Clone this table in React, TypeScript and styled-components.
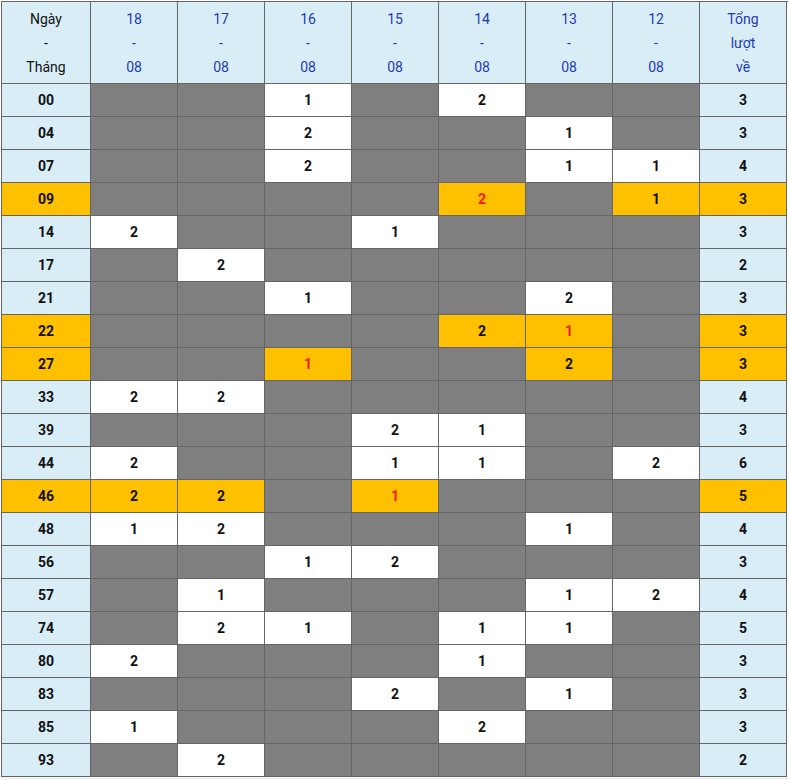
import React from "react";
import styled, { createGlobalStyle } from "styled-components";

const GlobalStyle = createGlobalStyle`
  body {
    margin: 0;
    background: #ffffff;
    font-family: Roboto, "Liberation Sans", Arial, sans-serif;
  }
`;

type Tone = "label" | "empty" | "value" | "hot";

const dates = ["18", "17", "16", "15", "14", "13", "12"];

// "" = no hit, "1" = hit, "2o" = hit on a hot row, "1r" = hot with red digit
const rows: { num: string; hot?: boolean; cells: string[]; total: number }[] = [
  { num: "00", cells: ["", "", "1", "", "2", "", ""], total: 3 },
  { num: "04", cells: ["", "", "2", "", "", "1", ""], total: 3 },
  { num: "07", cells: ["", "", "2", "", "", "1", "1"], total: 4 },
  { num: "09", hot: true, cells: ["", "", "", "", "2r", "", "1o"], total: 3 },
  { num: "14", cells: ["2", "", "", "1", "", "", ""], total: 3 },
  { num: "17", cells: ["", "2", "", "", "", "", ""], total: 2 },
  { num: "21", cells: ["", "", "1", "", "", "2", ""], total: 3 },
  { num: "22", hot: true, cells: ["", "", "", "", "2o", "1r", ""], total: 3 },
  { num: "27", hot: true, cells: ["", "", "1r", "", "", "2o", ""], total: 3 },
  { num: "33", cells: ["2", "2", "", "", "", "", ""], total: 4 },
  { num: "39", cells: ["", "", "", "2", "1", "", ""], total: 3 },
  { num: "44", cells: ["2", "", "", "1", "1", "", "2"], total: 6 },
  { num: "46", hot: true, cells: ["2o", "2o", "", "1r", "", "", ""], total: 5 },
  { num: "48", cells: ["1", "2", "", "", "", "1", ""], total: 4 },
  { num: "56", cells: ["", "", "1", "2", "", "", ""], total: 3 },
  { num: "57", cells: ["", "1", "", "", "", "1", "2"], total: 4 },
  { num: "74", cells: ["", "2", "1", "", "1", "1", ""], total: 5 },
  { num: "80", cells: ["2", "", "", "", "1", "", ""], total: 3 },
  { num: "83", cells: ["", "", "", "2", "", "1", ""], total: 3 },
  { num: "85", cells: ["1", "", "", "", "2", "", ""], total: 3 },
  { num: "93", cells: ["", "2", "", "", "", "", ""], total: 2 },
];

const tones: Record<Tone, string> = {
  label: "#d9edf7",
  empty: "#7f7f7f",
  value: "#ffffff",
  hot: "#ffc000",
};

const Page = styled.div`
  padding: 1px 0 0 1px;
  min-height: 779px;
  background: linear-gradient(#ffffff 777px, #f3f3f3 777px);
`;

const Grid = styled.div`
  display: grid;
  grid-template-columns: 89px repeat(8, 87px);
  grid-template-rows: 82px repeat(21, 33px);
  width: 786px;
  border-left: 1px solid #666666;
  border-top: 1px solid #666666;
`;

const Cell = styled.div<{ $tone: Tone; $red?: boolean }>`
  box-sizing: border-box;
  border-right: 1px solid #666666;
  border-bottom: 1px solid #666666;
  background: ${(p) => tones[p.$tone]};
  color: ${(p) => (p.$red ? "#ee1c25" : "#111111")};
  display: flex;
  align-items: center;
  justify-content: center;
  font-size: 14px;
  font-weight: 700;
`;

const HeadCell = styled.div<{ $blue?: boolean }>`
  box-sizing: border-box;
  border-right: 1px solid #666666;
  border-bottom: 1px solid #666666;
  background: #d9edf7;
  color: ${(p) => (p.$blue ? "#1c3bb0" : "#111111")};
  display: flex;
  flex-direction: column;
  align-items: center;
  justify-content: center;
  font-size: 14px;
  line-height: 24px;
  padding-top: 1px;
`;

function toneOf(v: string): Tone {
  if (!v) return "empty";
  return v.length > 1 ? "hot" : "value";
}

export default function App() {
  return (
    <Page>
      <GlobalStyle />
      <Grid>
        <HeadCell>
          <span>Ngày</span>
          <span>-</span>
          <span>Tháng</span>
        </HeadCell>
        {dates.map((d) => (
          <HeadCell key={d} $blue>
            <span>{d}</span>
            <span>-</span>
            <span>08</span>
          </HeadCell>
        ))}
        <HeadCell $blue>
          <span>Tổng</span>
          <span>lượt</span>
          <span>về</span>
        </HeadCell>
        {rows.map((r) => (
          <React.Fragment key={r.num}>
            <Cell $tone={r.hot ? "hot" : "label"}>{r.num}</Cell>
            {r.cells.map((v, i) => (
              <Cell key={i} $tone={toneOf(v)} $red={v.endsWith("r")}>
                {v.charAt(0)}
              </Cell>
            ))}
            <Cell $tone={r.hot ? "hot" : "label"}>{r.total}</Cell>
          </React.Fragment>
        ))}
      </Grid>
    </Page>
  );
}
